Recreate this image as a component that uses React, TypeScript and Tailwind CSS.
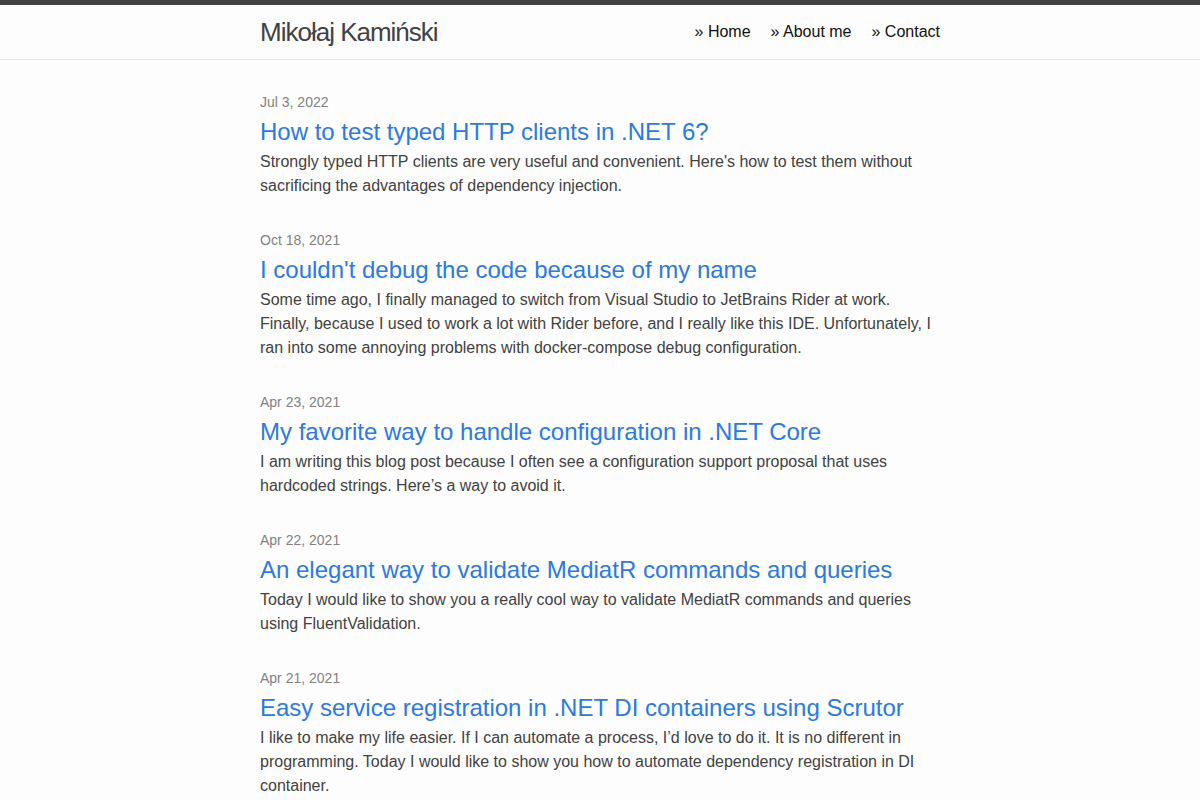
const posts = [
  {
    date: 'Jul 3, 2022',
    title: 'How to test typed HTTP clients in .NET 6?',
    excerpt:
      "Strongly typed HTTP clients are very useful and convenient. Here's how to test them without sacrificing the advantages of dependency injection.",
  },
  {
    date: 'Oct 18, 2021',
    title: "I couldn't debug the code because of my name",
    excerpt:
      'Some time ago, I finally managed to switch from Visual Studio to JetBrains Rider at work. Finally, because I used to work a lot with Rider before, and I really like this IDE. Unfortunately, I ran into some annoying problems with docker-compose debug configuration.',
  },
  {
    date: 'Apr 23, 2021',
    title: 'My favorite way to handle configuration in .NET Core',
    excerpt:
      'I am writing this blog post because I often see a configuration support proposal that uses hardcoded strings. Here’s a way to avoid it.',
  },
  {
    date: 'Apr 22, 2021',
    title: 'An elegant way to validate MediatR commands and queries',
    excerpt:
      'Today I would like to show you a really cool way to validate MediatR commands and queries using FluentValidation.',
  },
  {
    date: 'Apr 21, 2021',
    title: 'Easy service registration in .NET DI containers using Scrutor',
    excerpt:
      'I like to make my life easier. If I can automate a process, I’d love to do it. It is no different in programming. Today I would like to show you how to automate dependency registration in DI container.',
  },
]

const navLinks = ['Home', 'About me', 'Contact']

export default function App() {
  return (
    <div
      className="min-h-screen bg-[#fdfdfd] text-[#111]"
      style={{ fontFamily: '"Liberation Sans", Arial, sans-serif' }}
    >
      <header className="border-t-[5px] border-b border-t-[#424242] border-b-[#e8e8e8]">
        <div className="mx-auto flex h-[54px] w-[680px] items-center justify-between">
          <a href="#" className="text-[26px] leading-[54px] tracking-[-1px] text-[#424242]">
            Mikołaj Kamiński
          </a>
          <nav className="flex gap-5 text-base leading-[54px]">
            {navLinks.map((l) => (
              <a key={l} href="#" className="text-[#111]">
                » {l}
              </a>
            ))}
          </nav>
        </div>
      </header>

      <main className="mx-auto w-[680px] pt-[32px]">
        <ul className="flex flex-col gap-[32px]">
          {posts.map((p) => (
            <li key={p.title}>
              <div className="text-sm leading-[21px] text-[#828282]">{p.date}</div>
              <a href="#" className="block pt-[1px] text-2xl leading-[36px] text-[#2a7ae2]">
                {p.title}
              </a>
              <p className="text-base leading-6 text-[#424242]">{p.excerpt}</p>
            </li>
          ))}
        </ul>
      </main>
    </div>
  )
}
